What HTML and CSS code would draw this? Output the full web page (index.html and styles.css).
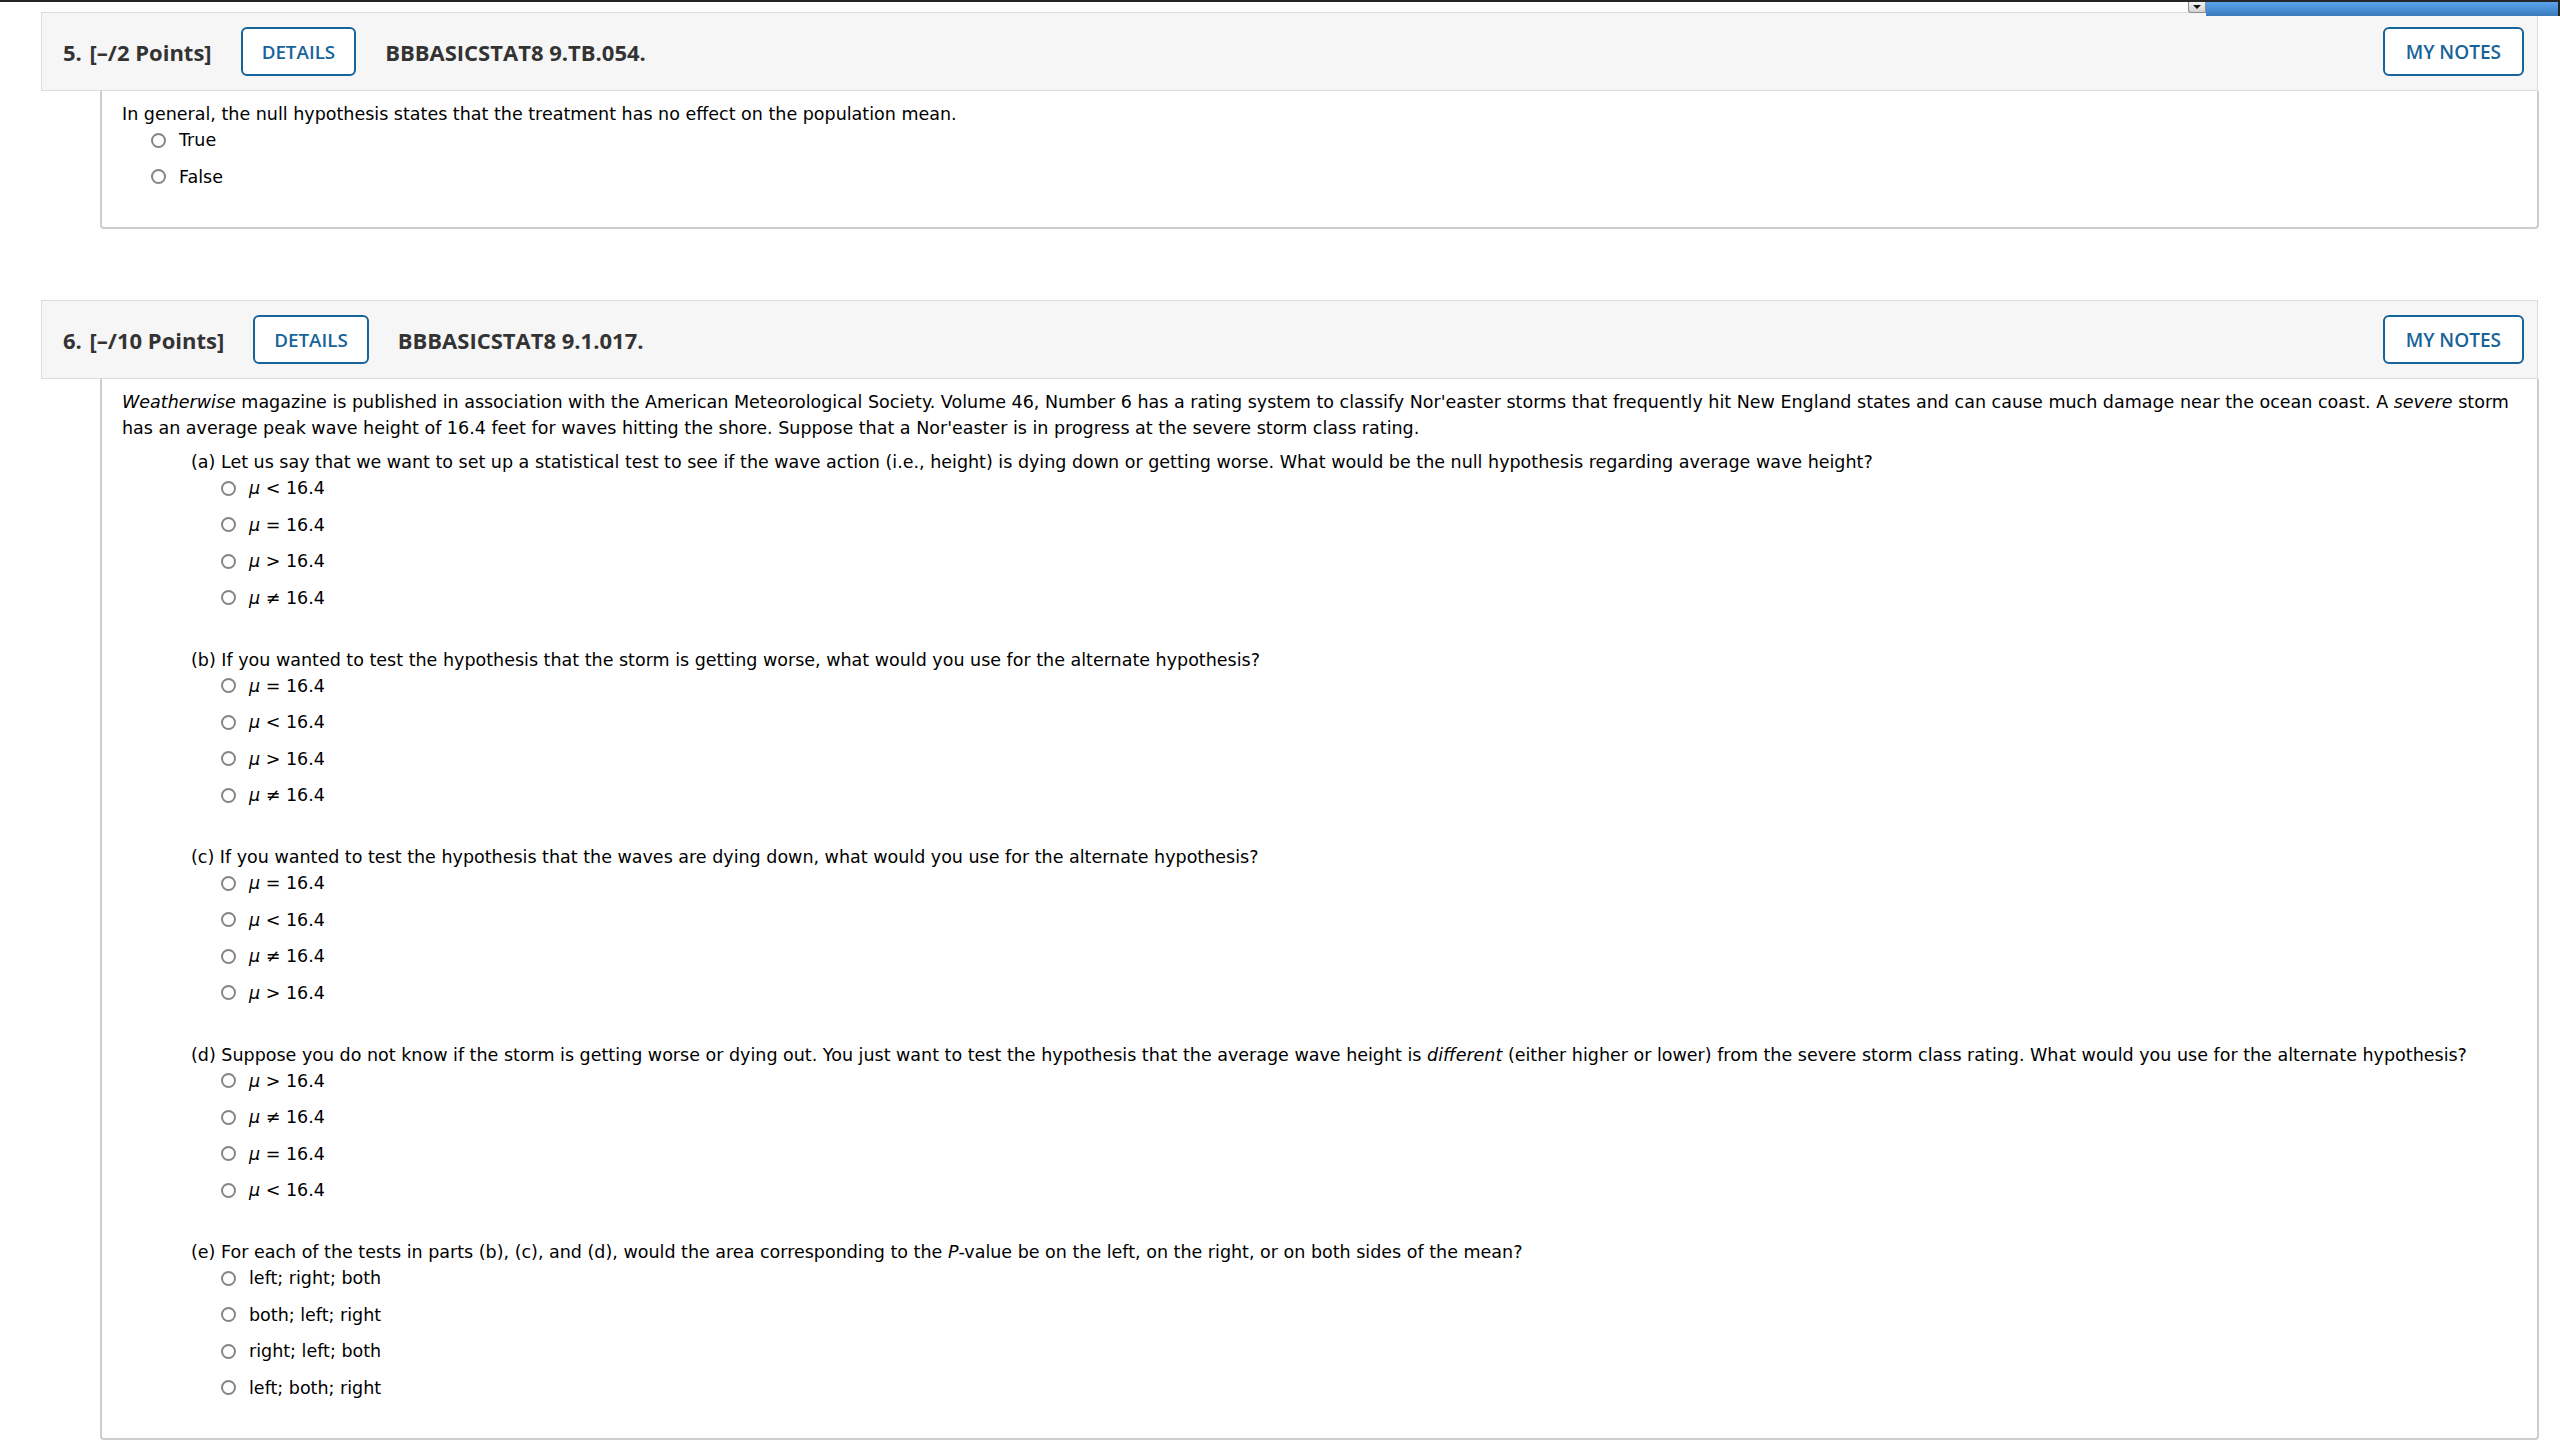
FILE: index.html
```html
<!DOCTYPE html>
<html lang="en">
<head>
<meta charset="utf-8">
<title>Assignment</title>
<link rel="stylesheet" href="styles.css">
</head>
<body>
<div class="toolbar">
  <div class="toolbar-line"></div>
  <div class="toolbar-drop"><span class="caret"></span></div>
  <div class="toolbar-blue"></div>
  <div class="toolbar-edge"></div>
</div>
<main class="questions">
  <section class="question">
    <header class="qhead">
      <span class="qtitle"><span class="qnum">5.</span> [–/2 Points]</span>
      <button class="qbtn">DETAILS</button>
      <span class="qcode">BBBASICSTAT8 9.TB.054.</span>
      <button class="qbtn notes">MY NOTES</button>
    </header>
    <div class="qbody">
      <p class="stem">In general, the null hypothesis states that the treatment has no effect on the population mean.</p>
      <ul class="opts">
        <li><span class="radio"></span>True</li>
        <li><span class="radio"></span>False</li>
      </ul>
    </div>
  </section>

  <section class="question">
    <header class="qhead">
      <span class="qtitle"><span class="qnum">6.</span> [–/10 Points]</span>
      <button class="qbtn">DETAILS</button>
      <span class="qcode">BBBASICSTAT8 9.1.017.</span>
      <button class="qbtn notes">MY NOTES</button>
    </header>
    <div class="qbody">
      <p class="stem intro"><i>Weatherwise</i> magazine is published in association with the American Meteorological Society. Volume 46, Number 6 has a rating system to classify Nor'easter storms that frequently hit New England states and can cause much damage near the ocean coast. A <i>severe</i> storm has an average peak wave height of 16.4 feet for waves hitting the shore. Suppose that a Nor'easter is in progress at the severe storm class rating.</p>

      <div class="part">
        <p class="stem">(a) Let us say that we want to set up a statistical test to see if the wave action (i.e., height) is dying down or getting worse. What would be the null hypothesis regarding average wave height?</p>
        <ul class="opts">
          <li><span class="radio"></span><i>μ</i> &lt; 16.4</li>
          <li><span class="radio"></span><i>μ</i> = 16.4</li>
          <li><span class="radio"></span><i>μ</i> &gt; 16.4</li>
          <li><span class="radio"></span><i>μ</i> ≠ 16.4</li>
        </ul>
      </div>

      <div class="part">
        <p class="stem">(b) If you wanted to test the hypothesis that the storm is getting worse, what would you use for the alternate hypothesis?</p>
        <ul class="opts">
          <li><span class="radio"></span><i>μ</i> = 16.4</li>
          <li><span class="radio"></span><i>μ</i> &lt; 16.4</li>
          <li><span class="radio"></span><i>μ</i> &gt; 16.4</li>
          <li><span class="radio"></span><i>μ</i> ≠ 16.4</li>
        </ul>
      </div>

      <div class="part">
        <p class="stem">(c) If you wanted to test the hypothesis that the waves are dying down, what would you use for the alternate hypothesis?</p>
        <ul class="opts">
          <li><span class="radio"></span><i>μ</i> = 16.4</li>
          <li><span class="radio"></span><i>μ</i> &lt; 16.4</li>
          <li><span class="radio"></span><i>μ</i> ≠ 16.4</li>
          <li><span class="radio"></span><i>μ</i> &gt; 16.4</li>
        </ul>
      </div>

      <div class="part">
        <p class="stem">(d) Suppose you do not know if the storm is getting worse or dying out. You just want to test the hypothesis that the average wave height is <i>different</i> (either higher or lower) from the severe storm class rating. What would you use for the alternate hypothesis?</p>
        <ul class="opts">
          <li><span class="radio"></span><i>μ</i> &gt; 16.4</li>
          <li><span class="radio"></span><i>μ</i> ≠ 16.4</li>
          <li><span class="radio"></span><i>μ</i> = 16.4</li>
          <li><span class="radio"></span><i>μ</i> &lt; 16.4</li>
        </ul>
      </div>

      <div class="part">
        <p class="stem">(e) For each of the tests in parts (b), (c), and (d), would the area corresponding to the <i>P</i>-value be on the left, on the right, or on both sides of the mean?</p>
        <ul class="opts">
          <li><span class="radio"></span>left; right; both</li>
          <li><span class="radio"></span>both; left; right</li>
          <li><span class="radio"></span>right; left; both</li>
          <li><span class="radio"></span>left; both; right</li>
        </ul>
      </div>
    </div>
  </section>
</main>
</body>
</html>
```

FILE: styles.css
```css
html, body {
  margin: 0;
  padding: 0;
  background: #ffffff;
}

body {
  font-family: "DejaVu Sans", Verdana, sans-serif;
  font-size: 17.5px;
  line-height: 26px;
  color: #000000;
  position: relative;
  min-height: 1444px;
  overflow: hidden;
}

/* remnant of the fixed toolbar at the very top */
.toolbar-line {
  position: absolute;
  left: 0;
  top: 0;
  width: 2560px;
  height: 2px;
  background: #262626;
  z-index: 5;
}
.toolbar-drop {
  position: absolute;
  left: 2188px;
  top: 2px;
  width: 18px;
  height: 11px;
  box-sizing: border-box;
  border: 1px solid #8c8c8c;
  border-top: none;
  border-radius: 0 0 0 3px;
  background: linear-gradient(#f4f4f4, #d2d2d2);
  z-index: 5;
}
.caret {
  position: absolute;
  left: 4px;
  top: 3px;
  width: 0;
  height: 0;
  border-left: 4px solid transparent;
  border-right: 4px solid transparent;
  border-top: 4px solid #111;
}
.toolbar-blue {
  position: absolute;
  left: 2206px;
  top: 2px;
  width: 352px;
  height: 14px;
  background: linear-gradient(#5aa5ee, #3b7bbd);
  z-index: 5;
}
.toolbar-edge {
  position: absolute;
  left: 2558px;
  top: 0;
  width: 2px;
  height: 16px;
  background: #262626;
  z-index: 5;
}

.questions {
  padding: 12px 0 0 41px;
  width: 2497px;
}

.question + .question {
  margin-top: 71px;
}

.qhead {
  display: flex;
  align-items: center;
  gap: 29px;
  box-sizing: border-box;
  height: 79px;
  padding: 0 13px 0 21px;
  background: #f6f6f6;
  border: 1px solid #dcdcdc;
  font-family: "Open Sans", "Liberation Sans", sans-serif;
  color: #333333;
}

.qtitle,
.qcode {
  font-size: 22px;
  font-weight: 700;
  line-height: 30px;
  white-space: nowrap;
}

.qnum {
  margin-right: 2px;
}

.qbtn {
  height: 49px;
  box-sizing: border-box;
  padding: 0 19px;
  border: 2px solid #17649a;
  border-radius: 6px;
  background: #ffffff;
  color: #17649a;
  font-family: "Open Sans", "Liberation Sans", sans-serif;
  font-size: 18.8px;
  font-weight: 600;
  cursor: pointer;
}

.qbtn.notes {
  margin-left: auto;
  padding: 0 21px;
  font-size: 19px;
}

.qbody {
  margin-left: 59px;
  margin-right: -1px;
  padding: 10px 20px 27px 20px;
  border: 2px solid #cecece;
  border-top: none;
  border-radius: 0 0 4px 4px;
}

.stem {
  margin: 0;
}

.stem.intro {
  margin-bottom: 8px;
}

.opts {
  list-style: none;
  margin: 0;
  padding: 0 0 0 28.5px;
}

.opts li {
  margin-bottom: 10.5px;
  white-space: nowrap;
}

.radio {
  display: inline-block;
  box-sizing: border-box;
  width: 15px;
  height: 15px;
  margin-right: 13.5px;
  vertical-align: -1.5px;
  border-radius: 50%;
  border: 2px solid #858585;
  background: #ffffff;
}

.part {
  margin-left: 69px;
  margin-bottom: 36px;
}

.part:last-child {
  margin-bottom: 0;
}

.part .opts {
  padding-left: 29.5px;
}
```
